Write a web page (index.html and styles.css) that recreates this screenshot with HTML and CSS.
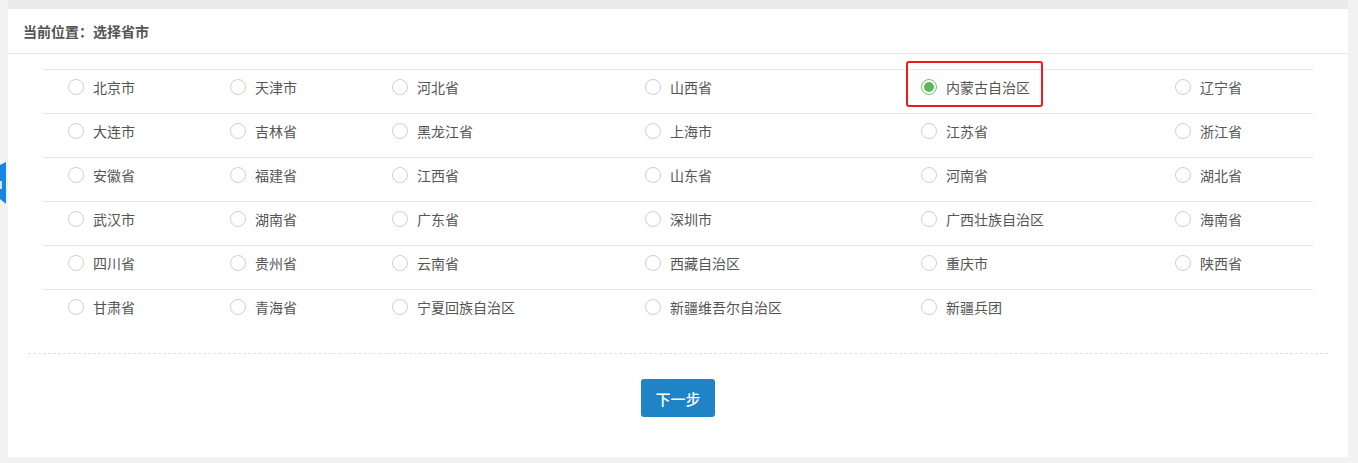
FILE: index.html
```html
<!DOCTYPE html>
<html lang="zh">
<head>
<meta charset="utf-8">
<title>选择省市</title>
<link rel="stylesheet" href="styles.css">
</head>
<body>
<div class="page">
  <div class="topstrip"></div>
  <div class="card">
    <div class="crumb">当前位置：选择省市</div>
    <div class="grid">
      <label class="cell"><span class="radio"></span>北京市</label>
      <label class="cell"><span class="radio"></span>天津市</label>
      <label class="cell"><span class="radio"></span>河北省</label>
      <label class="cell"><span class="radio"></span>山西省</label>
      <label class="cell selected"><span class="radio on"></span>内蒙古自治区<span class="mark"></span></label>
      <label class="cell"><span class="radio"></span>辽宁省</label>

      <label class="cell"><span class="radio"></span>大连市</label>
      <label class="cell"><span class="radio"></span>吉林省</label>
      <label class="cell"><span class="radio"></span>黑龙江省</label>
      <label class="cell"><span class="radio"></span>上海市</label>
      <label class="cell"><span class="radio"></span>江苏省</label>
      <label class="cell"><span class="radio"></span>浙江省</label>

      <label class="cell"><span class="radio"></span>安徽省</label>
      <label class="cell"><span class="radio"></span>福建省</label>
      <label class="cell"><span class="radio"></span>江西省</label>
      <label class="cell"><span class="radio"></span>山东省</label>
      <label class="cell"><span class="radio"></span>河南省</label>
      <label class="cell"><span class="radio"></span>湖北省</label>

      <label class="cell"><span class="radio"></span>武汉市</label>
      <label class="cell"><span class="radio"></span>湖南省</label>
      <label class="cell"><span class="radio"></span>广东省</label>
      <label class="cell"><span class="radio"></span>深圳市</label>
      <label class="cell"><span class="radio"></span>广西壮族自治区</label>
      <label class="cell"><span class="radio"></span>海南省</label>

      <label class="cell"><span class="radio"></span>四川省</label>
      <label class="cell"><span class="radio"></span>贵州省</label>
      <label class="cell"><span class="radio"></span>云南省</label>
      <label class="cell"><span class="radio"></span>西藏自治区</label>
      <label class="cell"><span class="radio"></span>重庆市</label>
      <label class="cell"><span class="radio"></span>陕西省</label>

      <label class="cell"><span class="radio"></span>甘肃省</label>
      <label class="cell"><span class="radio"></span>青海省</label>
      <label class="cell"><span class="radio"></span>宁夏回族自治区</label>
      <label class="cell"><span class="radio"></span>新疆维吾尔自治区</label>
      <label class="cell"><span class="radio"></span>新疆兵团</label>
      <label class="cell"></label>
    </div>
    <div class="divider"></div>
    <div class="actions"><button class="btn">下一步</button></div>
  </div>
  <div class="sidetab"><span class="sidetab-mark"></span></div>
</div>
</body>
</html>
```

FILE: styles.css
```css
html, body {
  margin: 0;
  padding: 0;
  background: #f2f2f2;
}
body {
  font-family: "Noto Sans CJK SC", "Noto Sans", sans-serif;
  color: #555;
}
.page {
  position: relative;
  padding: 0 10px 6px 8px;
}
.topstrip {
  height: 9px;
  background: #e9eaec;
}
.card {
  background: #fff;
  padding-bottom: 40px;
}
.crumb {
  height: 44px;
  line-height: 44px;
  padding-left: 15px;
  font-size: 14px;
  font-weight: bold;
  color: #555;
  border-bottom: 1px solid #e8e8e8;
}
.grid {
  margin: 15px 35px 0;
  display: grid;
  grid-template-columns: 162px 162px 253px 276px 254px 163px;
  grid-auto-rows: 44px;
}
.cell {
  position: relative;
  box-sizing: border-box;
  display: flex;
  align-items: flex-start;
  padding-left: 25px;
  padding-top: 9px;
  font-size: 14px;
  line-height: 16px;
  color: #555;
  border-top: 1px solid #e6e6e6;
}
.radio {
  box-sizing: border-box;
  width: 16px;
  height: 16px;
  border: 1px solid #cfcfcf;
  border-radius: 50%;
  margin-right: 9px;
  flex: none;
  background: #fff;
}
.radio.on {
  border-color: #6cc36c;
  position: relative;
}
.radio.on::after {
  content: "";
  position: absolute;
  left: 2px;
  top: 2px;
  width: 10px;
  height: 10px;
  border-radius: 50%;
  background: #5cb85c;
}
.mark {
  position: absolute;
  left: 10px;
  top: -9px;
  width: 133px;
  height: 42px;
  border: 2px solid #f21a1a;
  border-radius: 3px;
}
.divider {
  margin: 20px 20px 0;
  border-top: 1px dashed #e2e2e2;
}
.actions {
  display: flex;
  justify-content: center;
  padding-top: 25px;
}
.btn {
  width: 74px;
  height: 38px;
  border: none;
  border-radius: 3px;
  background: #1e84c6;
  color: #fff;
  font-family: "Noto Sans CJK SC", sans-serif;
  font-size: 15px;
  font-weight: 500;
  cursor: pointer;
}
.sidetab {
  position: absolute;
  left: 0;
  top: 162px;
  width: 6px;
  height: 42px;
  background: #1686e2;
  clip-path: polygon(0 3px, 100% 0, 100% 100%, 0 calc(100% - 5px));
}
.sidetab-mark {
  position: absolute;
  left: 0;
  top: 19px;
  width: 2px;
  height: 8px;
  background: #cfe6fa;
}
```
